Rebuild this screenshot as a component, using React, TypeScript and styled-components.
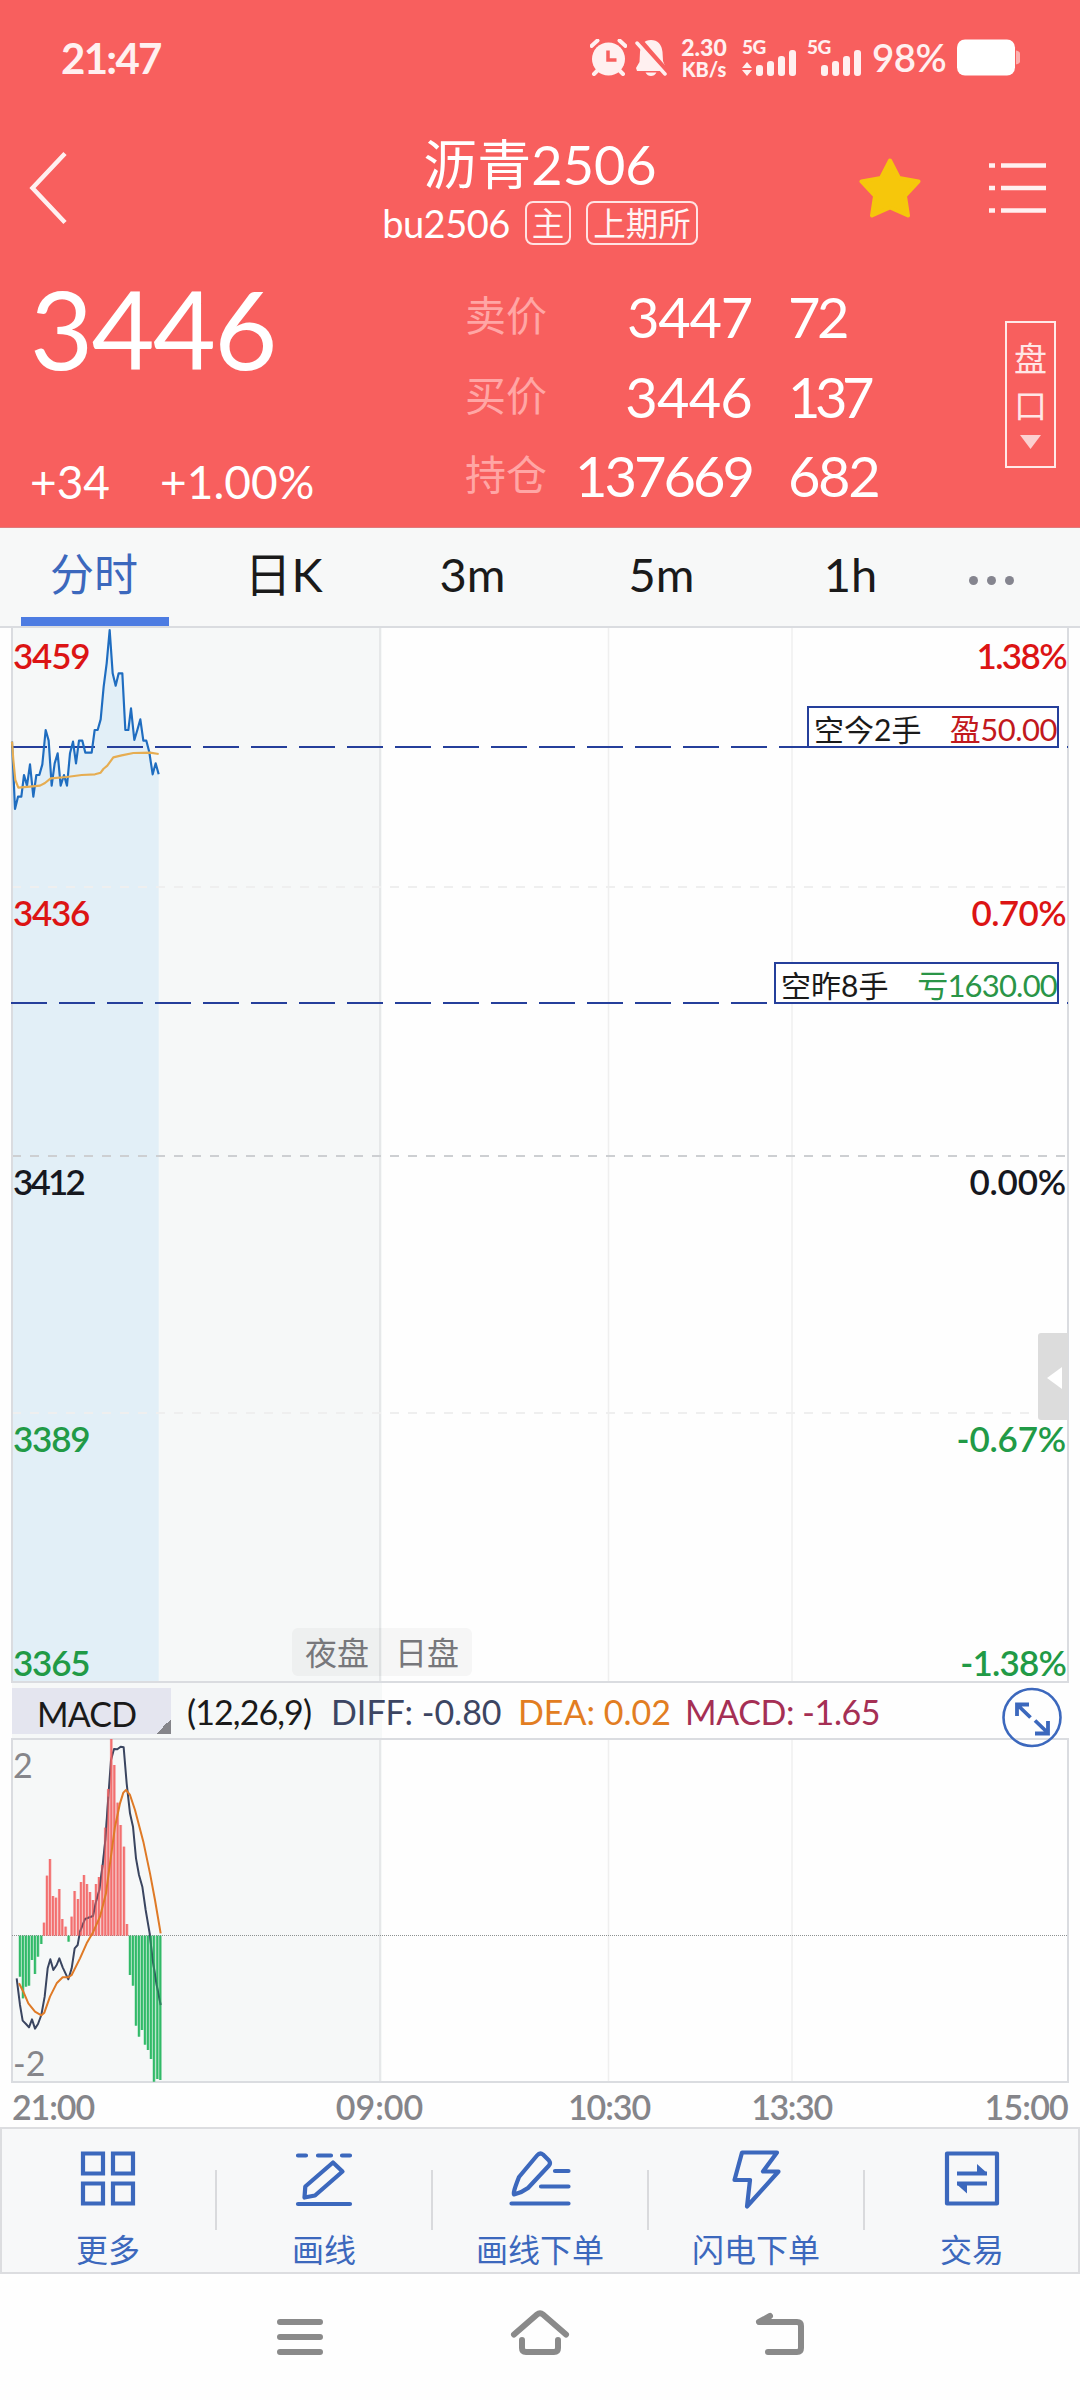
import React from "react";
import styled, { createGlobalStyle } from "styled-components";

const BLUE = "#3c68bd";
const NAVY = "#253f9b";
const UP = "#dc1414";
const DOWN = "#219a46";
const GREY = "#85858a";
const LINE = "#dadce0";
const CORAL = "#f85f5e";

const Global = createGlobalStyle`
  * { box-sizing: border-box; }
  body {
    margin: 0;
    background: #fff;
    font-family: Lato, "Noto Sans CJK SC", sans-serif;
  }
`;

const Screen = styled.main`
  width: 1080px;
  height: 2400px;
  display: flex;
  flex-direction: column;
  overflow: hidden;
  background: #fefefe;
`;

const Txt = styled.span<{ $s: number; $ls?: number; $c?: string; $w?: number; $lh?: number }>`
  font-size: ${(p) => p.$s}px;
  letter-spacing: ${(p) => p.$ls ?? 0}px;
  color: ${(p) => p.$c ?? "inherit"};
  font-weight: ${(p) => p.$w ?? 400};
  line-height: ${(p) => (p.$lh ? `${p.$lh}px` : 1)};
  white-space: pre;
`;

/* ---------- header ---------- */

const Header = styled.header`
  height: 528px;
  flex: none;
  background: ${CORAL};
  color: #fff;
  border-bottom: 1px solid #e07a7c;
`;

const StatusBar = styled.div`
  height: 115px;
  padding: 0 60px 0 61px;
  display: flex;
  align-items: center;
  color: #fff0f0;
`;

const StatusIcons = styled.div`
  display: flex;
  align-items: center;
  margin-left: auto;
`;

const BellIcon = styled.svg`
  margin-left: 8px;
`;

const Speed = styled.div`
  width: 46px;
  margin: 0 15px 0 14px;
  display: flex;
  flex-direction: column;
  align-items: center;
  gap: 1px;
`;

const Signal = styled.div<{ $ml?: number }>`
  width: 55px;
  height: 37px;
  margin-left: ${(p) => p.$ml ?? 0}px;
  display: grid;
  svg, span { grid-area: 1 / 1; }
`;

const Percent = styled.div`
  width: 76px;
  margin: 0 9px 0 10px;
  display: flex;
`;

const TitleBar = styled.div`
  height: 145px;
  display: grid;
  grid-template-columns: 270px 540px 270px;
`;

const TitleSide = styled.div<{ $pl: number }>`
  display: flex;
  align-items: center;
  gap: 68px;
  padding-left: ${(p) => p.$pl}px;
`;

const TitleMid = styled.div`
  display: flex;
  flex-direction: column;
  align-items: center;
  padding-top: 20px;
`;

const SubTitle = styled.div`
  display: flex;
  align-items: center;
  margin-top: 6px;
  gap: 15px;
`;

const Tag = styled.span`
  height: 44px;
  border: 2px solid #ffe3e3;
  border-radius: 8px;
  padding: 0 5px;
  font-size: 32.500px;
  line-height: 42px;
  color: #fff4f4;
`;

const Quote = styled.section`
  height: 268px;
  display: grid;
  grid-template-columns: 465px 86px 201px 253px 51px;
`;

const Last = styled.div`
  padding-left: 30px;
  display: flex;
  flex-direction: column;
`;

const Change = styled.div`
  display: flex;
  gap: 50px;
  margin-top: 70px;
`;

const QuoteCol = styled.div<{ $end?: boolean; $pl?: number }>`
  display: grid;
  grid-template-rows: 80px 79px 80px;
  padding-top: 17px;
  padding-left: ${(p) => p.$pl ?? 0}px;
  justify-items: ${(p) => (p.$end ? "end" : "start")};
`;

const DepthButton = styled.button`
  width: 51px;
  height: 147px;
  margin: 61px 0 0;
  padding: 12px 0 0;
  border: 2px solid #ffe9e9;
  background: none;
  color: #ffe6e6;
  font-family: inherit;
  display: flex;
  flex-direction: column;
  align-items: center;
  svg { margin-top: 6px; }
`;

/* ---------- tabs ---------- */

const Tabs = styled.nav`
  height: 100px;
  flex: none;
  display: flex;
  padding-top: 1px;
  background: #f7f8f8;
  border-bottom: 2px solid ${LINE};
`;

const Tab = styled.div<{ $on?: boolean }>`
  width: 189px;
  height: 97px;
  flex: none;
  display: flex;
  justify-content: center;
  color: ${(p) => (p.$on ? "#3c68bd" : "#1a1a1a")};
  &::after {
    content: "";
    display: ${(p) => (p.$on ? "block" : "none")};
    width: 148px;
    height: 9px;
    margin-left: -117px;
    align-self: flex-end;
    background: #4d7ce2;
  }
  span { ${(p) => (p.$on ? "margin-left: 30px;" : "")} }
`;

const More = styled.div`
  padding: 47px 0 0 24px;
  display: flex;
  gap: 9px;
  i {
    width: 9px;
    height: 9px;
    border-radius: 50%;
    background: #85858f;
  }
`;

/* ---------- charts ---------- */

const Panel = styled.section<{ $h: number }>`
  position: relative;
  height: ${(p) => p.$h}px;
  flex: none;
  > svg { display: block; }
`;

const AxisLabel = styled(Txt)<{ $y: number; $right?: boolean }>`
  position: absolute;
  top: ${(p) => p.$y}px;
  ${(p) => (p.$right ? "right: 14px;" : "left: 13px;")}
`;

const PositionTag = styled.div<{ $y: number; $w: number }>`
  position: absolute;
  top: ${(p) => p.$y}px;
  right: 21px;
  width: ${(p) => p.$w}px;
  height: 42px;
  padding: 0 0 0 5px;
  border: 2px solid ${NAVY};
  background: #fff;
  color: #1a1a1a;
  display: flex;
  justify-content: space-between;
`;

const SessionTags = styled.div`
  position: absolute;
  left: 292px;
  top: 1000px;
  width: 180px;
  height: 48px;
  border-radius: 6px;
  background: rgba(20, 40, 30, 0.035);
  color: #77777b;
  display: flex;
  padding-left: 13px;
  gap: 26px;
`;

const MacdHead = styled.div`
  position: relative;
  height: 55px;
  flex: none;
  display: flex;
  align-items: center;
  padding-left: 12px;
  background: linear-gradient(90deg, #fefefe 12px, #f6f8f8 12px, #f6f8f8 382px, #fefefe 382px);
`;

const IndicatorButton = styled.div`
  width: 159px;
  height: 46px;
  margin-right: 16px;
  padding-left: 25px;
  background: linear-gradient(135deg, transparent 50%, #85858a 50%) right bottom / 15px 15px no-repeat, #e4e5ef;
`;

const Stat = styled.div<{ $w: number }>`
  width: ${(p) => p.$w}px;
  display: flex;
  padding-top: 3px;
`;

const Expand = styled.svg`
  position: absolute;
  left: 1002px;
  top: 4px;
  z-index: 2;
`;

const Times = styled.div`
  height: 44px;
  flex: none;
  display: grid;
  grid-template-columns: 12px 253px 229px 230px 135px 209px;
  color: ${GREY};
`;

const Time = styled.div<{ $at: "start" | "center" | "end" }>`
  display: flex;
  justify-content: ${(p) => p.$at};
`;

/* ---------- bottom ---------- */

const Toolbar = styled.nav`
  height: 147px;
  flex: none;
  display: flex;
  box-shadow: inset 0 0 0 2px #dcdde0;
  background: #f7f8f9;
`;

const Tool = styled.div`
  flex: 1;
  display: flex;
  flex-direction: column;
  align-items: center;
  padding-top: 17px;
  gap: 15px;
  color: ${BLUE};
`;

const Rule = styled.i`
  width: 2px;
  height: 60px;
  margin: 43px -1px 0;
  background: #d9dadd;
`;

const SystemNav = styled.nav`
  height: 126px;
  flex: none;
  display: flex;
  justify-content: center;
  gap: 180px;
  padding-top: 32px;
`;

/* ---------- data ---------- */

const price =
  "36,365 45,567 54,530 64,530 72,465 81,497 90,433 100,530 109,465 118,465 127,433 137,330 146,362 155,497 164,430 173,400 182,497 192,465 201,497 210,400 219,365 228,430 237,362 247,362 256,398 275,398 284,330 293,330 302,298 311,200 320,130 329,30 338,160 347,197 356,160 367,160 376,330 385,330 393,265 403,360 412,330 421,298 430,362 439,362 448,397 458,463 467,430 476,463";
const average =
  "36,365 40,420 46,480 55,503 90,500 120,497 135,489 152,475 200,471 245,465 285,463 302,458 310,447 322,437 340,412 365,406 400,399 450,398 476,402";
const diff =
  "50,745 60,825 68,872 78,882 87,892 96,868 105,896 114,882 124,855 134,800 143,715 151,688 160,720 170,705 178,685 188,712 205,748 215,715 224,655 233,645 240,605 255,567 279,558 288,515 298,480 308,405 316,330 325,200 333,90 342,57 352,58 362,50 371,52 380,160 390,250 399,290 408,385 417,435 427,470 437,540 449,610 458,690 470,765 482,825";
const dea =
  "57,760 70,785 85,820 105,845 124,856 133,848 150,800 170,760 188,742 205,742 215,735 240,685 260,640 280,605 300,560 318,490 330,400 345,290 360,220 370,188 378,180 390,195 405,240 430,335 450,430 465,510 482,610";
const bars: [number, number][] = [
  [60, 740], [69, 805], [78, 770], [87, 767], [96, 690], [105, 732], [114, 680], [124, 642],
  [132, 578], [141, 437], [150, 387], [159, 498], [168, 503], [178, 477], [187, 567], [197, 590],
  [206, 635], [215, 560], [224, 483], [234, 507], [243, 456], [252, 435], [261, 462], [270, 486],
  [279, 510], [288, 462], [297, 441], [307, 405], [316, 293], [325, 177], [334, 27], [343, 105],
  [353, 218], [362, 285], [372, 350], [381, 582], [390, 735], [399, 767], [408, 887], [417, 920],
  [426, 900], [435, 944], [444, 960], [453, 987], [462, 1055], [472, 1047], [481, 1050],
];

const levels = [
  { y: 9, l: "3459", ll: -1.2, r: "1.38%", rl: -1.6, c: UP },
  { y: 266, l: "3436", ll: -1.3, r: "0.70%", rl: -0.6, c: UP },
  { y: 535, l: "3412", ll: -2.8, r: "0.00%", rl: -0.2, c: "#16181f" },
  { y: 792, l: "3389", ll: -1.2, r: "-0.67%", rl: -0.2, c: DOWN },
  { y: 1016, l: "3365", ll: -1.2, r: "-1.38%", rl: -0.8, c: DOWN },
];

/* ---------- pieces ---------- */

const SignalBars = ({ arrows }: { arrows?: boolean }) => (
  <svg width="55" height="37" fill="#fff0f0">
    {arrows && <path d="M0 29l5-6 5 6zM0 31h10l-5 6z" />}
    {[[14, 26], [25, 22], [36, 17], [47, 11]].map(([x, y]) => (
      <rect key={x} x={x} y={y} width="7" height={37 - y} rx="3" />
    ))}
  </svg>
);

const PriceChart = () => (
  <svg width="1080" height="1055">
    <rect x="12" y="0" width="370" height="1054" fill="#f6f8f8" />
    <g transform="translate(0 -8) scale(.33333)">
      <polygon points={`36,3183 ${price} 476,3183`} fill="#e2eff7" />
    </g>
    <g stroke="#efefef" strokeWidth="2">
      <path d="M608.500 0V1054M792 0V1054" strokeWidth="1.500" />
      <path d="M380 0V1054" stroke="#e6e8e9" />
      <path d="M12 259H1067M12 785H1067" strokeDasharray="9 9" />
      <path d="M12 528H1067" stroke="#cdcfd2" strokeDasharray="9 9" />
    </g>
    <path d="M12 0V1054H1068V0" fill="none" stroke="#dadce0" strokeWidth="2" />
    <path d="M11 119H1068M11 375H1068" stroke={NAVY} strokeWidth="2" strokeDasharray="36 12" />
    <g transform="translate(0 -8) scale(.33333)" fill="none" strokeLinejoin="round">
      <polyline points={price} stroke="#1f6dc0" strokeWidth="6.5" />
      <polyline points={average} stroke="#e6ad52" strokeWidth="6.5" />
    </g>
    <path d="M1068 705h-27q-3 0-3 3v81q0 3 3 3h27z" fill="#dcdcdc" />
    <path d="M1062 739v22l-15-11z" fill="#fff" />
  </svg>
);

const MacdChart = () => (
  <svg width="1080" height="345">
    <rect x="12" y="0" width="370" height="344" fill="#f6f8f8" />
    <path d="M608.500 0V344M792 0V344" stroke="#efefef" strokeWidth="1.500" />
    <path d="M380 0V344" stroke="#e6e8e9" strokeWidth="2" />
    <rect x="12" y="1" width="1056" height="343" fill="none" stroke="#dadce0" strokeWidth="2" />
    <path d="M12 197.500H1067" stroke="#8d9292" strokeWidth="1.200" strokeDasharray="1 1" />
    <g transform="translate(0 -8) scale(.33333)" strokeLinejoin="round">
      <polyline points={diff} fill="none" stroke="#3a4560" strokeWidth="6" />
      {bars.map(([x, y]) => (
        <g key={x} fill={y < 617 ? "#f26161" : "#1eb45a"}>
          <rect x={x - 4.5} y={Math.min(y, 617)} width="9" height={Math.abs(y - 617)} opacity=".42" />
          <rect x={x - 3} y={Math.min(y, 617)} width="5.5" height={Math.abs(y - 617)} opacity=".85" />
        </g>
      ))}
      <polyline points={dea} fill="none" stroke="#df7a26" strokeWidth="6" />
      <path d="M240 605L255 567 279 558 288 515 298 480 308 405 316 330 325 200M449 610L458 690 470 765 482 825" fill="none" stroke="#3a4560" strokeWidth="5" opacity=".35" />
    </g>
  </svg>
);

const toolIcons = [
  <path key="a" d="M8 9.500h20v20h-20zM38 9.500h20v20h-20zM8 39.500h20v20h-20zM38 39.500h20v20h-20z" strokeLinejoin="miter" />,
  <path key="b" d="M7 11.500h8M27 11.500h13M51 11.500h8M7 60h52M42 18.500l9.500 9-27.500 24-10.500 2 .8-11z" />,
  <path key="c" d="M4.500 59.500h57M34 42.500h27.500M48 27h13.500M21 44q-6 4.500-14 6.500-1.500-1 5-17.500L30 11.500q3-3.500 6-1l6 6q2 2.500 0 5z" />,
  <path key="d" d="M19 8.500h35l-14 19h15.500L24 62.500l3-26.500H11.500z" />,
  <g key="e">
    <rect x="8" y="9.500" width="50" height="50" />
    <path d="M18 29.500h30M18 39.500h30" strokeLinecap="butt" />
    <path d="M38 20l10 9v2H38zM28 49.500l-10-9v-2h10z" fill={BLUE} stroke="none" />
  </g>,
];
const toolNames = ["更多", "画线", "画线下单", "闪电下单", "交易"];

export default function App() {
  return (
    <Screen>
      <Global />
      <Header>
        <StatusBar>
          <Txt $s={42} $w={700} $ls={-1.7}>21:47</Txt>
          <StatusIcons>
            <svg width="37" height="37" viewBox="0 0 37 37" fill="#fff0f0">
              <circle cx="18.500" cy="20" r="16.500" />
              <path d="M1.500 7l6-5.500M35.500 7l-6-5.500M4 35l5-5M33 35l-5-5" stroke="#fff0f0" strokeWidth="4" strokeLinecap="round" />
              <path d="M18 11.500v9.500h8.500" fill="none" stroke={CORAL} strokeWidth="3.500" />
            </svg>
            <BellIcon width="32" height="37" viewBox="0 0 32 37" fill="#fff0f0">
              <path d="M5 13Q6 1 16 1q10 0 11.500 12l.5 9 3 7.500-1.500 2.500H2L1 29l3.500-6zM10.500 33.500h11q-2 3.500-5.500 3.500t-5.500-3.500z" />
              <path d="M4 1l27 31" stroke={CORAL} strokeWidth="6" />
              <path d="M2 4l28 31" stroke="#fff0f0" strokeWidth="3.500" strokeLinecap="round" />
            </BellIcon>
            <Speed>
              <Txt $s={23} $w={900} $lh={21}>2.30</Txt>
              <Txt $s={20} $w={900} $lh={20}>KB/s</Txt>
            </Speed>
            <Signal>
              <SignalBars arrows />
              <Txt $s={19} $w={900} $lh={15} $ls={-0.5}>5G</Txt>
            </Signal>
            <Signal $ml={10}>
              <SignalBars />
              <Txt $s={19} $w={900} $lh={15} $ls={-0.5}>5G</Txt>
            </Signal>
            <Percent>
              <Txt $s={38.5} $w={600} $ls={-0.6}>98%</Txt>
            </Percent>
            <svg width="63" height="37" viewBox="0 0 63 37">
              <rect width="58" height="36" rx="8" y=".5" fill="#fff" />
              <path d="M59 11.500q4 1 4 3v8q0 2-4 3z" fill="#fff" opacity=".5" />
            </svg>
          </StatusIcons>
        </StatusBar>

        <TitleBar>
          <TitleSide $pl={28}>
            <svg width="40" height="74" fill="none" stroke="#fff0f0" strokeWidth="4.500">
              <path d="M37 2.500L4.500 37 37 71.500" />
            </svg>
          </TitleSide>
          <TitleMid>
            <Txt $s={54} $lh={60}>沥青2506</Txt>
            <SubTitle>
              <Txt $s={38} $lh={44} $ls={-0.5}>bu2506</Txt>
              <Tag>主</Tag>
              <Tag>上期所</Tag>
            </SubTitle>
          </TitleMid>
          <TitleSide $pl={49}>
            <svg width="62" height="62" viewBox="0 0 62 62" fill="#f6c70b" stroke="#f6c70b" strokeWidth="4" strokeLinejoin="round">
              <path d="M31 3.500l9 17.500 19.500 3.500L46 39l3 19.500L31 50.500 13 58.500l3-19.500L2.500 24.500 22 21z" />
            </svg>
            <svg width="58" height="50" stroke="#fff0f0" strokeWidth="4.500">
              <path d="M0 2.500h6M12 2.500h45M0 25h6M12 25h45M0 47.500h6M12 47.500h45" />
            </svg>
          </TitleSide>
        </TitleBar>

        <Quote>
          <Last>
            <Txt $s={109} $lh={135} $ls={-1.8}>3446</Txt>
            <Change>
              <Txt $s={46} $lh={34}>+34</Txt>
              <Txt $s={46} $lh={34}>+1.00%</Txt>
            </Change>
          </Last>
          <QuoteCol>
            {["卖价", "买价", "持仓"].map((t) => (
              <Txt key={t} $s={41} $lh={78} $c="#ffa6a5">{t}</Txt>
            ))}
          </QuoteCol>
          <QuoteCol $end>
            {([["3447", -1.2], ["3446", -0.8], ["137669", -3]] as const).map(([t, ls]) => (
              <Txt key={t} $s={56} $lh={80} $ls={ls}>{t}</Txt>
            ))}
          </QuoteCol>
          <QuoteCol $pl={36}>
            {([["72", -3.5], ["137", -5.5], ["682", -2.4]] as const).map(([t, ls]) => (
              <Txt key={t} $s={56} $lh={80} $ls={ls}>{t}</Txt>
            ))}
          </QuoteCol>
          <DepthButton>
            <Txt $s={33} $lh={47}>盘</Txt>
            <Txt $s={33} $lh={47}>口</Txt>
            <svg width="22" height="14">
              <path d="M0 0h21L10.500 14z" fill="#fcd0d0" />
            </svg>
          </DepthButton>
        </Quote>
      </Header>

      <Tabs>
        <Tab $on><Txt $s={44} $lh={91}>分时</Txt></Tab>
        {["日K", "3m", "5m", "1h"].map((t) => (
          <Tab key={t}><Txt $s={47} $lh={90}>{t}</Txt></Tab>
        ))}
        <More><i /><i /><i /></More>
      </Tabs>

      <Panel $h={1055}>
        <PriceChart />
        {levels.map((v) => (
          <React.Fragment key={v.l}>
            <AxisLabel $y={v.y} $s={35} $w={600} $lh={36} $ls={v.ll} $c={v.c}>{v.l}</AxisLabel>
            <AxisLabel $y={v.y} $right $s={35} $w={600} $lh={36} $ls={v.rl} $c={v.c}>{v.r}</AxisLabel>
          </React.Fragment>
        ))}
        <PositionTag $y={78} $w={252}>
          <Txt $s={30} $lh={43}>空今2手</Txt>
          <Txt $s={31} $lh={43} $ls={-0.5} $c="#c2191d">盈50.00</Txt>
        </PositionTag>
        <PositionTag $y={334} $w={285}>
          <Txt $s={30} $lh={43}>空昨8手</Txt>
          <Txt $s={31} $lh={43} $ls={-0.8} $c="#2a9547">亏1630.00</Txt>
        </PositionTag>
        <SessionTags>
          <Txt $s={32} $lh={50}>夜盘</Txt>
          <Txt $s={32} $lh={50}>日盘</Txt>
        </SessionTags>
      </Panel>

      <MacdHead>
        <IndicatorButton><Txt $s={34} $lh={51} $ls={-0.8} $c="#1a1a1a">MACD</Txt></IndicatorButton>
        <Stat $w={144}><Txt $s={34} $ls={-0.9} $c="#1a1a1a">(12,26,9)</Txt></Stat>
        <Stat $w={187}><Txt $s={34} $c="#3c4562">DIFF: -0.80</Txt></Stat>
        <Stat $w={167}><Txt $s={34} $c="#e27d22">DEA: 0.02</Txt></Stat>
        <Stat $w={200}><Txt $s={34} $ls={-0.4} $c="#a52f54">MACD: -1.65</Txt></Stat>
        <Expand width="61" height="61" viewBox="0 0 61 61" fill="none" stroke={BLUE}>
          <circle cx="30" cy="30.500" r="28.500" strokeWidth="2.600" />
          <path d="M15 29V17.500h12M15.500 18l13 12.500M46 34v12.500H33M46 46L33 33.500" strokeWidth="3.800" />
        </Expand>
      </MacdHead>

      <Panel $h={345}>
        <MacdChart />
        <AxisLabel $y={9} $s={34} $lh={36} $c="#85858a">2</AxisLabel>
        <AxisLabel $y={307} $s={34} $lh={36} $c="#85858a">-2</AxisLabel>
      </Panel>

      <Times>
        <span />
        {([["21:00", "start", -1.1], ["09:00", "center", 0], ["10:30", "center", -1.1], ["13:30", "center", -1.4], ["15:00", "end", -0.8]] as const).map(([t, at, ls]) => (
          <Time key={t} $at={at}><Txt $s={34} $lh={48} $w={600} $ls={ls}>{t}</Txt></Time>
        ))}
      </Times>

      <Toolbar>
        {toolNames.map((n, i) => (
          <React.Fragment key={n}>
            {i > 0 && <Rule />}
            <Tool>
              <svg width="66" height="68" fill="none" stroke={BLUE} strokeWidth="4.200" strokeLinecap="round" strokeLinejoin="round">
                {toolIcons[i]}
              </svg>
              <Txt $s={32} $lh={46}>{n}</Txt>
            </Tool>
          </React.Fragment>
        ))}
      </Toolbar>

      <SystemNav>
        <svg width="60" height="60" fill="none" stroke="#8a8a8a" strokeWidth="6" strokeLinecap="round">
          <path d="M10 16h40M10 31h40M10 46h40" />
        </svg>
        <svg width="60" height="60" fill="none" stroke="#8a8a8a" strokeWidth="6" strokeLinecap="round" strokeLinejoin="round">
          <path d="M4 28.500L27 8.500q3-2.500 6 0l23 20M12 34v8q0 4 4 4h28q4 0 4-4v-8" />
        </svg>
        <svg width="60" height="60" fill="none" stroke="#8a8a8a" strokeWidth="6" strokeLinecap="round" strokeLinejoin="round">
          <path d="M20 10L9 16h38q4 0 4 4v22q0 4-4 4H18" />
        </svg>
      </SystemNav>
    </Screen>
  );
}
